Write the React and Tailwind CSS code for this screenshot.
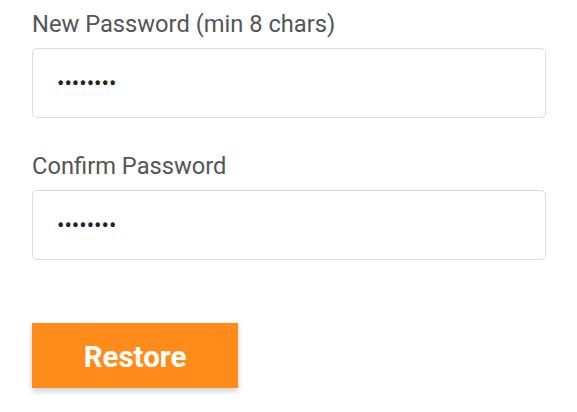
import React from 'react';

function Field({ label }) {
    return (
        <div>
            <label className="block text-[23.7px] leading-[30px] text-[#555555]">{label}</label>
            <input
                type="password"
                value="12345678"
                readOnly
                className="mt-[9px] block w-[514px] h-[70px] px-6 border border-[#d9dde3] rounded-[5px] bg-white text-[22px] text-[#222222] outline-none"
            />
        </div>
    );
}

export default function App() {
    return (
        <div className="min-h-screen bg-white pl-8 pt-[9px] font-['Roboto',sans-serif]">
            <div className="flex flex-col gap-[33px]">
                <Field label="New Password (min 8 chars)" />
                <Field label="Confirm Password" />
            </div>
            <button className="mt-[63px] w-[206px] h-[65px] pt-[3px] bg-[#ff8c1a] text-white text-[29.5px] font-bold shadow-[0_3px_6px_rgba(0,0,0,0.2)]">
                Restore
            </button>
        </div>
    );
}
